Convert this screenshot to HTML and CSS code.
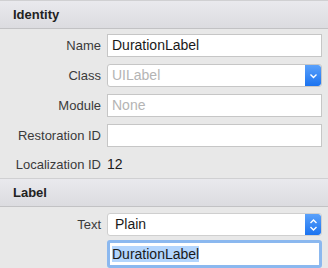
FILE: index.html
```html
<!DOCTYPE html>
<html lang="en">
<head>
  <meta charset="UTF-8">
  <title>Identity Inspector</title>
  <link rel="stylesheet" href="styles.css">
</head>
<body>
  <div class="section-head">Identity</div>
  <div class="rows">
    <div class="row">
      <span class="label">Name</span>
      <div class="field">DurationLabel</div>
    </div>
    <div class="row">
      <span class="label">Class</span>
      <div class="field combo">
        <span class="placeholder">UILabel</span>
        <span class="btn">
          <svg width="9" height="6" viewBox="0 0 9 6"><path d="M1.5 1.5 L4.5 4.5 L7.5 1.5" fill="none" stroke="#fff" stroke-width="1.4"/></svg>
        </span>
      </div>
    </div>
    <div class="row">
      <span class="label">Module</span>
      <div class="field"><span class="placeholder">None</span></div>
    </div>
    <div class="row">
      <span class="label">Restoration ID</span>
      <div class="field"></div>
    </div>
    <div class="row plain-row">
      <span class="label">Localization ID</span>
      <span class="value">12</span>
    </div>
  </div>

  <div class="section-head">Label</div>
  <div class="rows second">
    <div class="row">
      <span class="label">Text</span>
      <div class="field popup">
        <span>Plain</span>
        <span class="btn">
          <svg width="9" height="14" viewBox="0 0 9 14"><path d="M1.5 5 L4.5 2 L7.5 5 M1.5 9 L4.5 12 L7.5 9" fill="none" stroke="#fff" stroke-width="1.4"/></svg>
        </span>
      </div>
    </div>
    <div class="row focus-row">
      <span class="label"></span>
      <div class="field focused"><span class="selected">DurationLabel</span></div>
    </div>
  </div>
</body>
</html>
```

FILE: styles.css
```css
body {
  margin: 0;
  background: #e8e8e8;
  font-family: "Liberation Sans", Arial, sans-serif;
  font-size: 13px;
  color: #262626;
  overflow: hidden;
}
.section-head {
  height: 27px;
  line-height: 27px;
  padding-left: 13px;
  font-weight: bold;
  color: #222;
  background: linear-gradient(#e9e9ed, #dcdce0);
  border-top: 1px solid #d0d0d2;
  border-bottom: 1px solid #c2c2c4;
}
.rows {
  padding: 5px 6px 4px 0;
  display: flex;
  flex-direction: column;
  gap: 7px;
}
.rows.second {
  padding-top: 6px;
  gap: 4px;
}
.row {
  display: grid;
  grid-template-columns: 101px 1fr;
  column-gap: 6px;
  align-items: center;
  height: 23px;
}
.plain-row {
  height: 20px;
}
.focus-row {
  height: 28px;
}
.label {
  text-align: right;
  color: #3a3a3a;
}
.value {
  font-size: 14px;
  color: #1a1a1a;
}
.field {
  height: 23px;
  box-sizing: border-box;
  background: #fff;
  border: 1px solid #c6c6c6;
  padding: 0 4px;
  line-height: 21px;
  font-size: 14px;
  color: #1a1a1a;
  white-space: nowrap;
  overflow: hidden;
}
.placeholder {
  color: #b4b4b4;
}
.combo, .popup {
  display: flex;
  justify-content: space-between;
  padding-right: 0;
  border-radius: 3px;
}
.popup {
  padding-left: 7px;
  border-color: #cfcfcf;
}
.btn {
  width: 16px;
  background: linear-gradient(#5aa1fb, #1b73f0);
  border-radius: 0 3px 3px 0;
  display: flex;
  align-items: center;
  justify-content: center;
}
.focused {
  border: 3px solid #8bb8ef;
  border-radius: 3px;
  height: 28px;
  line-height: 22px;
  padding-left: 2px;
}
.selected {
  background: #b3d5fd;
}
```
